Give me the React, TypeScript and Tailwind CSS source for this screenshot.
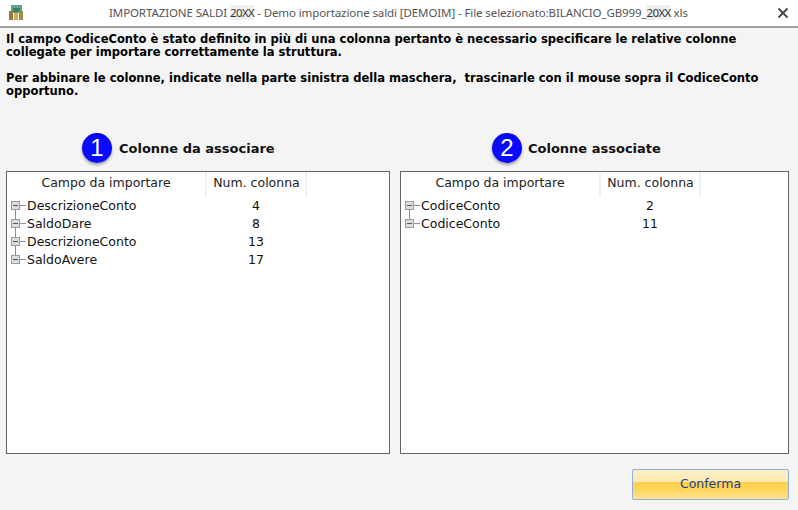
const dejavu = "font-['DejaVu_Sans',sans-serif]";

function TreeIcon({ last }: { last: boolean }) {
  return (
    <svg width="17" height="18" viewBox="0 0 17 18" className="shrink-0 overflow-visible">
      {!last && <path d="M5.5 13V27" stroke="#7f7fe6" strokeWidth="1" fill="none" />}
      <path d="M10 8.5H16" stroke="#8f8fc0" strokeWidth="1" />
      <rect x="1.5" y="4.5" width="8" height="8" fill="#dcdcdc" stroke="#9a9aa8" />
      <path d="M3 8.5H8" stroke="#555" strokeWidth="1" />
    </svg>
  );
}

function Panel({ rows, className }: { rows: [string, string][]; className: string }) {
  return (
    <div className={`bg-white border border-[#666] h-[283px] overflow-hidden ${className}`}>
      <div className="flex h-[25px] text-[12.5px] text-[#222]">
        <div className="w-[200px] border-r-2 border-[#f0f0f0] flex items-start justify-center pt-[2px]">
          Campo da importare
        </div>
        <div className="w-[100px] border-r-2 border-[#f0f0f0] flex items-start justify-center pt-[2px] pl-[1px]">
          Num. colonna
        </div>
      </div>
      <div className="pl-[3px]">
        {rows.map(([name, num], i) => (
          <div key={i} className="flex items-center h-[18px] text-[12.5px] text-[#111]">
            <TreeIcon last={i === rows.length - 1} />
            <div className="w-[179px]">{name}</div>
            <div className="w-[100px] text-center">{num}</div>
          </div>
        ))}
      </div>
    </div>
  );
}

function Heading({ n, label, className }: { n: string; label: string; className: string }) {
  return (
    <div className={`flex items-center ${className}`}>
      <div className="w-[30px] h-[30px] rounded-full bg-[radial-gradient(circle_at_50%_55%,#0a0aff_55%,#0000c8)] text-white flex items-center justify-center text-[24px] shadow-[0_2px_3px_rgba(0,0,0,0.35)] font-['Liberation_Sans',sans-serif]">
        {n}
      </div>
      <div className="font-bold text-[13px] text-[#111] pt-[1px]">{label}</div>
    </div>
  );
}

export default function App() {
  return (
    <div className={`w-[798px] h-[510px] bg-[#f4f4f4] overflow-hidden flex flex-col ${dejavu}`}>
      <div className="h-[28px] shrink-0 bg-white border-b-2 border-[#a0a0a0] flex items-center relative font-['Noto_Sans',sans-serif] text-[11.5px] text-[#555]">
        <svg width="16" height="16" viewBox="0 0 16 16" className="ml-[8px] shrink-0">
          <rect x="3" y="0" width="11" height="8" fill="#5fa585" />
          <rect x="5" y="3" width="7" height="4" fill="#3f7f62" />
          <rect x="1" y="6" width="4" height="9" fill="#8f7a3a" />
          <rect x="6" y="8" width="4" height="7" fill="#d0aa5a" />
          <rect x="11" y="6" width="4" height="9" fill="#a88a3e" />
        </svg>
        <div className="ml-[85px] whitespace-nowrap tracking-[-0.1px]">
          IMPORTAZIONE SALDI <span className="text-[#333] bg-[#f0f0f0] tracking-[-0.6px]">20XX</span> - Demo importazione saldi [DEMOIM] - File selezionato:BILANCIO_GB999_<span className="text-[#333] bg-[#f0f0f0] tracking-[-0.6px]">20XX</span> xls
        </div>
        <svg width="12" height="12" viewBox="0 0 12 12" className="absolute left-[777px] top-[7px]">
          <path d="M1.5 1.5L10.5 10.5M10.5 1.5L1.5 10.5" stroke="#444" strokeWidth="1.8" />
        </svg>
      </div>

      <div className="pl-[6px] pt-[5px] font-bold text-[11.55px] leading-[13px] text-black whitespace-pre">
        <p>Il campo CodiceConto è stato definito in più di una colonna pertanto è necessario specificare le relative colonne</p>
        <p>collegate per importare correttamente la struttura.</p>
        <p className="mt-[13px]">Per abbinare le colonne, indicate nella parte sinistra della maschera,  trascinarle con il mouse sopra il CodiceConto</p>
        <p>opportuno.</p>
      </div>

      <div className="flex mt-[35px] h-[30px]">
        <Heading n="1" label="Colonne da associare" className="ml-[82px] gap-[7px] w-[410px]" />
        <Heading n="2" label="Colonne associate" className="gap-[6px]" />
      </div>

      <div className="flex mt-[8px] ml-[6px] gap-[10px]">
        <Panel
          className="w-[384px]"
          rows={[
            ["DescrizioneConto", "4"],
            ["SaldoDare", "8"],
            ["DescrizioneConto", "13"],
            ["SaldoAvere", "17"],
          ]}
        />
        <Panel
          className="w-[389px]"
          rows={[
            ["CodiceConto", "2"],
            ["CodiceConto", "11"],
          ]}
        />
      </div>

      <div className="flex justify-end mt-[15px] mr-[9px]">
        <button className="w-[157px] h-[31px] rounded-[2px] border border-[#8fb0dc] bg-[linear-gradient(#fdf0c8_0%,#fde9b0_40%,#fed04a_43%,#fed65f_70%,#fee391_100%)] text-[12.5px] text-[#24408c]">
          Conferma
        </button>
      </div>
    </div>
  );
}
